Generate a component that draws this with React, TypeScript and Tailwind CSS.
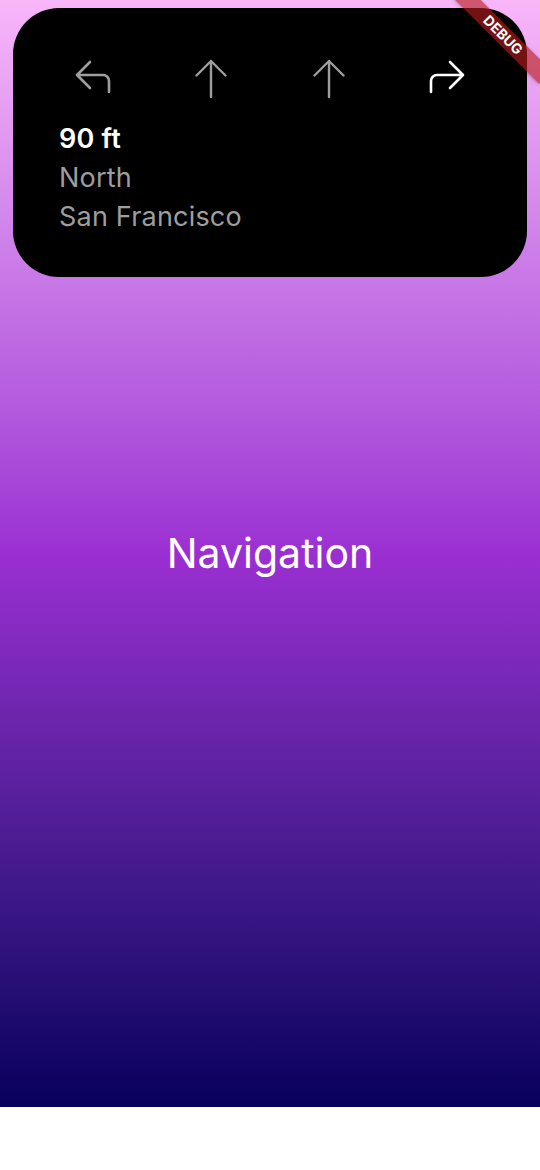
import React from "react";

const GRAY = "#9e9e9e";

function TurnIcon({ dir, color }: { dir: "left" | "right"; color: string }) {
  // drawn for the left turn, mirrored for the right one
  const d = "M17 5 L4 18 L17 31 M4 18 H30 a6 6 0 0 1 6 6 V35";
  return (
    <svg width="40" height="44" viewBox="0 0 40 44" fill="none">
      <path
        d={d}
        stroke={color}
        strokeWidth="2.6"
        strokeLinecap="round"
        strokeLinejoin="round"
        transform={dir === "right" ? "translate(40 0) scale(-1 1)" : undefined}
      />
    </svg>
  );
}

function UpIcon({ color }: { color: string }) {
  return (
    <svg width="40" height="44" viewBox="0 0 40 44" fill="none">
      <path
        d="M20 4 V40 M5.5 18.5 L20 4 L34.5 18.5"
        stroke={color}
        strokeWidth="2.4"
        strokeLinecap="round"
        strokeLinejoin="round"
      />
    </svg>
  );
}

function DirectionsCard() {
  return (
    <div className="self-start mx-[13px] mt-[8px] h-[269px] rounded-[46px] bg-black pt-[49px] [grid-area:1/1]">
      {/* maneuver row, next turn highlighted */}
      <div className="grid grid-cols-4 justify-items-center px-[21px]">
        <TurnIcon dir="left" color={GRAY} />
        <UpIcon color={GRAY} />
        <UpIcon color={GRAY} />
        <TurnIcon dir="right" color="#ffffff" />
      </div>
      <div className="mt-[18px] pl-[46px] text-[27px] leading-[39px] tracking-[0.2px]">
        <div className="font-semibold text-white">90 ft</div>
        <div className="text-[#9e9e9e]">North</div>
        <div className="text-[#9e9e9e]">San Francisco</div>
      </div>
    </div>
  );
}

function DebugBanner() {
  return (
    <div className="pointer-events-none absolute left-[443px] top-[26px] flex h-[18px] w-[120px] rotate-45 items-center justify-center bg-[#b71c1ca0] shadow-[0_1px_4px_rgba(0,0,0,0.25)]">
      <span className="text-[14px] font-bold leading-none text-white">DEBUG</span>
    </div>
  );
}

export default function App() {
  return (
    <div
      className="relative h-[1170px] w-[540px] overflow-hidden bg-white"
      style={{ fontFamily: "Inter, 'Noto Sans', sans-serif" }}
    >
      <div className="grid h-[1107px] bg-gradient-to-b from-[#f9b6f9] via-[#9b2fd2] to-[#07005c]">
        <div className="place-self-center text-[41px] leading-none text-white [grid-area:1/1]">
          Navigation
        </div>
        <DirectionsCard />
      </div>
      <DebugBanner />
    </div>
  );
}
